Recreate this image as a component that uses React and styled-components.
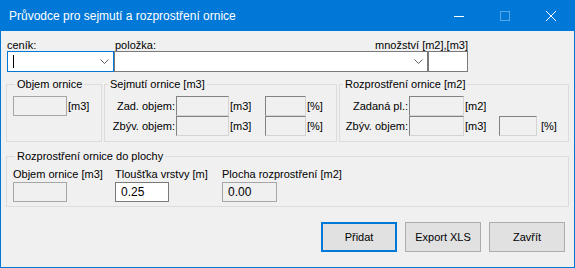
import React from 'react';
import styled, { createGlobalStyle } from 'styled-components';

const GlobalStyle = createGlobalStyle`
  html, body {
    margin: 0;
    padding: 0;
    background: #ffffff;
  }
  * {
    box-sizing: border-box;
  }
`;

const Window = styled.div`
  width: 575px;
  height: 268px;
  border: 1px solid #0078d7;
  border-top: none;
  background: #f0f0f0;
  display: flex;
  flex-direction: column;
  font-family: "Liberation Sans", Arial, sans-serif;
  font-size: 11px;
  color: #000;
`;

const TitleBar = styled.div`
  height: 31px;
  background: #0078d7;
  display: flex;
  align-items: center;
  padding-left: 8px;
  color: #fff;
  font-size: 12px;
`;

const Title = styled.div`
  flex: 1;
  white-space: nowrap;
`;

const CaptionButton = styled.div`
  width: 46px;
  height: 31px;
  display: flex;
  align-items: center;
  justify-content: center;
`;

const Body = styled.div`
  flex: 1;
  padding: 9px 5px 0 5px;
  display: flex;
  flex-direction: column;
`;

// --- top row: ceník / položka / množství
const LabelRow = styled.div`
  display: flex;
  width: 461px;
  margin-left: 1px;
  height: 11px;
  line-height: 11px;
  white-space: nowrap;
`;

const FieldLabel = styled.div`
  width: ${p => (p.$w ? `${p.$w}px` : 'auto')};
  flex: ${p => (p.$grow ? 1 : 'none')};
`;

const InputRow = styled.div`
  display: flex;
  margin-left: 1px;
  height: 21px;
`;

const Combo = styled.div`
  width: ${p => p.$w}px;
  height: 21px;
  background: #fff;
  border: 1px solid ${p => (p.$focused ? '#0078d7' : '#7a7a7a')};
  display: flex;
  align-items: center;
  padding: 0 4px 0 5px;
`;

const Caret = styled.span`
  width: 1px;
  height: 13px;
  background: #000;
`;

const ComboArrow = styled.svg`
  margin-left: auto;
`;

const TextBox = styled.div`
  width: ${p => p.$w}px;
  height: 20px;
  flex: none;
  background: ${p => (p.$tone === 'white' ? '#fff' : '#f0f0f0')};
  border: 1px solid ${p => (p.$tone === 'white' ? '#7a7a7a' : '#a6a6a6')};
  ${p =>
    p.$tone === 'sunken' &&
    `
    border-color: #828282 #d4d4d4 #d4d4d4 #828282;
  `}
  padding-left: 5px;
  line-height: 18px;
  font-size: 12px;
`;

// --- group boxes
const GroupRow = styled.div`
  display: flex;
  gap: 2px;
  margin-top: 6px;
`;

const Group = styled.fieldset`
  margin: 0;
  min-width: 0;
  width: ${p => p.$w}px;
  border: 1px solid #dcdcdc;
  padding: 5px 4px ${p => p.$pb ?? 5}px ${p => p.$pl ?? 6}px;
`;

const Legend = styled.legend`
  padding: 0 2px;
  margin-left: 2px;
  line-height: 13px;
  white-space: nowrap;
`;

const UnitRow = styled.div`
  display: flex;
  align-items: center;
  height: 20px;
`;

const Unit = styled.span`
  margin-left: ${p => p.$gap ?? 1}px;
  white-space: nowrap;
`;

const MeasureGrid = styled.div`
  display: grid;
  grid-template-columns: ${p => p.$cols};
  grid-auto-rows: 20px;
  align-items: center;
`;

const RowLabel = styled.div`
  display: flex;
  justify-content: flex-end;
  white-space: nowrap;
  padding-right: 1px;
`;

const Empty = styled.div``;

// --- spreading group
const ColumnGrid = styled.div`
  display: grid;
  grid-template-columns: 102px 107px auto;
`;

const Column = styled.div`
  display: flex;
  flex-direction: column;
  gap: 1px;
`;

const ColumnLabel = styled.div`
  line-height: 13px;
  white-space: nowrap;
`;

// --- buttons
const ButtonBar = styled.div`
  display: flex;
  justify-content: flex-end;
  gap: 8px;
  margin-top: 15px;
  margin-right: 4px;
`;

const Button = styled.div`
  width: 76px;
  height: 30px;
  background: #e1e1e1;
  border: ${p => (p.$default ? '2px solid #0078d7' : '1px solid #adadad')};
  display: flex;
  align-items: center;
  justify-content: center;
`;

const Chevron = () => (
  <ComboArrow width="9" height="5" viewBox="0 0 9 5">
    <polyline points="0.5,0.5 4.5,4.5 8.5,0.5" fill="none" stroke="#606060" strokeWidth="1" />
  </ComboArrow>
);

export default function App() {
  return (
    <>
      <GlobalStyle />
      <Window>
        <TitleBar>
          <Title>Průvodce pro sejmutí a rozprostření ornice</Title>
          <CaptionButton>
            <svg width="10" height="10" viewBox="0 0 10 10">
              <line x1="0" y1="5.5" x2="10" y2="5.5" stroke="#fff" strokeWidth="1" />
            </svg>
          </CaptionButton>
          <CaptionButton>
            <svg width="10" height="10" viewBox="0 0 10 10">
              <rect x="0.5" y="0.5" width="9" height="9" fill="none" stroke="rgba(255,255,255,0.35)" strokeWidth="1" />
            </svg>
          </CaptionButton>
          <CaptionButton>
            <svg width="10" height="10" viewBox="0 0 10 10">
              <path d="M0 0 L10 10 M10 0 L0 10" stroke="#fff" strokeWidth="1" />
            </svg>
          </CaptionButton>
        </TitleBar>

        <Body>
          <LabelRow>
            <FieldLabel $w={108}>ceník:</FieldLabel>
            <FieldLabel $grow>položka:</FieldLabel>
            <FieldLabel>množství [m2],[m3]</FieldLabel>
          </LabelRow>
          <InputRow>
            <Combo $w={107} $focused>
              <Caret />
              <Chevron />
            </Combo>
            <Combo $w={314}>
              <Chevron />
            </Combo>
            <TextBox $w={40} $tone="white" style={{ height: 21 }} />
          </InputRow>

          <GroupRow>
            <Group $w={96}>
              <Legend>Objem ornice</Legend>
              <UnitRow>
                <TextBox $w={54} />
                <Unit>[m3]</Unit>
              </UnitRow>
            </Group>

            <Group $w={233} $pl={1}>
              <Legend>Sejmutí ornice [m3]</Legend>
              <MeasureGrid $cols="70px 53px 36px 41px auto">
                <RowLabel>Zad. objem:</RowLabel>
                <TextBox $w={53} $tone="sunken" />
                <Unit>[m3]</Unit>
                <TextBox $w={41} $tone="sunken" />
                <Unit>[%]</Unit>
                <RowLabel>Zbýv. objem:</RowLabel>
                <TextBox $w={53} $tone="sunken" />
                <Unit>[m3]</Unit>
                <TextBox $w={41} $tone="sunken" />
                <Unit>[%]</Unit>
              </MeasureGrid>
            </Group>

            <Group $w={230} $pl={1}>
              <Legend>Rozprostření ornice [m2]</Legend>
              <MeasureGrid $cols="68px 55px 35px 38px auto">
                <RowLabel>Zadaná pl.:</RowLabel>
                <TextBox $w={55} $tone="sunken" />
                <Unit>[m2]</Unit>
                <Empty />
                <Empty />
                <RowLabel>Zbýv. objem:</RowLabel>
                <TextBox $w={55} $tone="sunken" />
                <Unit>[m3]</Unit>
                <TextBox $w={38} $tone="sunken" />
                <Unit $gap={4}>[%]</Unit>
              </MeasureGrid>
            </Group>
          </GroupRow>

          <Group $w={563} $pb={4} style={{ marginTop: 8 }}>
            <Legend>Rozprostření ornice do plochy</Legend>
            <ColumnGrid>
              <Column>
                <ColumnLabel>Objem ornice [m3]</ColumnLabel>
                <TextBox $w={54} />
              </Column>
              <Column>
                <ColumnLabel>Tloušťka vrstvy [m]</ColumnLabel>
                <TextBox $w={54} $tone="white">0.25</TextBox>
              </Column>
              <Column>
                <ColumnLabel>Plocha rozprostření [m2]</ColumnLabel>
                <TextBox $w={55}>0.00</TextBox>
              </Column>
            </ColumnGrid>
          </Group>

          <ButtonBar>
            <Button $default>Přidat</Button>
            <Button>Export XLS</Button>
            <Button>Zavřít</Button>
          </ButtonBar>
        </Body>
      </Window>
    </>
  );
}
